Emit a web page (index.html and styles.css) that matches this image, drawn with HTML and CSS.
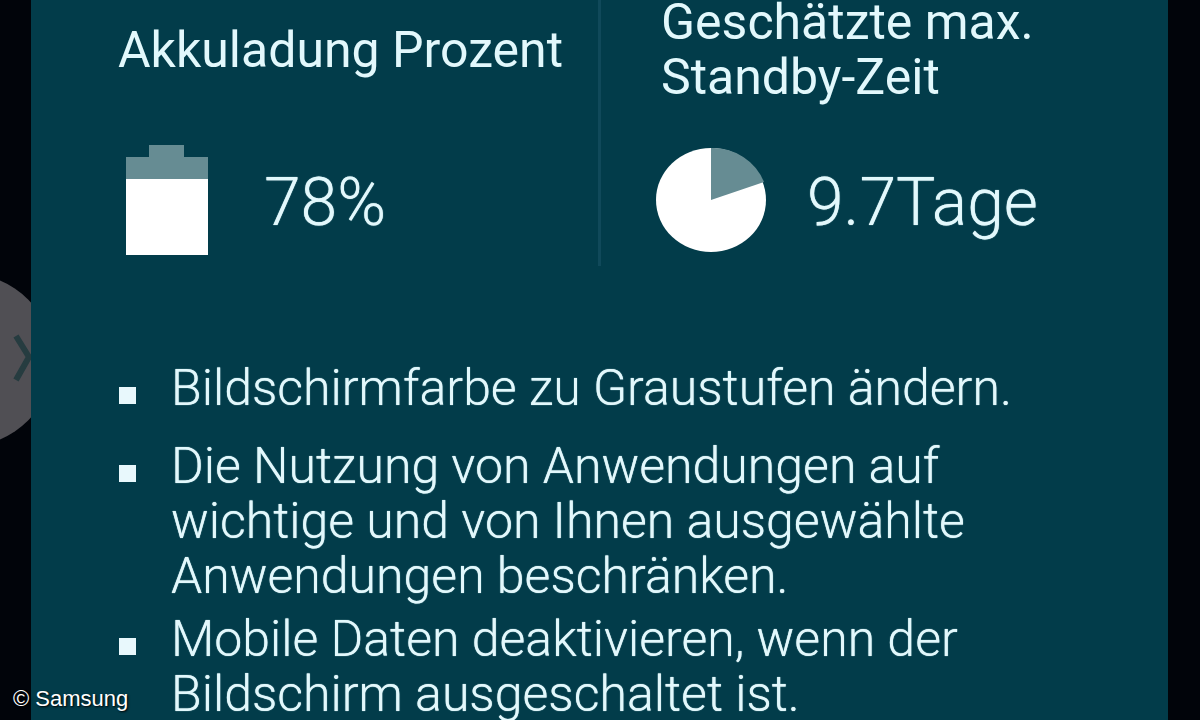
FILE: index.html
```html
<!DOCTYPE html>
<html lang="de">
<head>
<meta charset="utf-8">
<meta name="viewport" content="width=device-width, initial-scale=1">
<title>Ultra-Energiesparmodus</title>
<link rel="stylesheet" href="styles.css">
</head>
<body>
<div class="screen">
  <svg class="pager" viewBox="0 0 32 172" aria-hidden="true">
    <circle cx="-33" cy="86" r="86" fill="#504f54"/>
    <path d="M16 62 L29 83 L16 106" fill="none" stroke="#263c40" stroke-width="6"/>
  </svg>
  <main class="panel">
    <div class="stats">
      <section class="stat">
        <h2 class="title">Akkuladung Prozent</h2>
        <div class="reading">
          <svg class="battery" viewBox="0 0 82 110" aria-hidden="true">
            <path d="M0 12H23V0H58V12H82V34H0Z" fill="#668c93"/>
            <path d="M0 34H82V110H0Z" fill="#fff"/>
          </svg>
          <span class="value">78%</span>
        </div>
      </section>
      <section class="stat stat-standby">
        <h2 class="title">Geschätzte max. Standby-Zeit</h2>
        <div class="reading">
          <svg class="pie" viewBox="0 0 112 104" aria-hidden="true">
            <ellipse cx="56" cy="52" rx="55" ry="52" fill="#fff"/>
            <path d="M56 52V0A55 52 0 0 1 109 34Z" fill="#668c93"/>
          </svg>
          <span class="value">9.7Tage</span>
        </div>
      </section>
    </div>
    <ul class="notes">
      <li class="note note-first">Bildschirmfarbe zu Graustufen ändern.</li>
      <li class="note">Die Nutzung von Anwendungen auf wichtige und von Ihnen ausgewählte Anwendungen beschränken.</li>
      <li class="note">Mobile Daten deaktivieren, wenn der Bildschirm ausgeschaltet ist.</li>
    </ul>
  </main>
  <small class="credit">© Samsung</small>
</div>
</body>
</html>
```
FILE: styles.css
```css
* {
  box-sizing: border-box;
}

body {
  margin: 0;
  background: #01040a;
  font-family: Roboto, "Liberation Sans", sans-serif;
}

.screen {
  position: relative;
  height: 100vh;
  padding: 0 32px 0 31px;
  overflow: hidden;
}

.pager {
  position: absolute;
  left: 0;
  top: 274px;
  width: 32px;
  height: 172px;
}

.panel {
  position: relative;
  min-height: 100%;
  background: #023c4a;
  color: #e2f8fc;
}

.stats {
  display: grid;
  grid-template-columns: 567fr 570fr;
}

.stat {
  padding: 0 0 10px 87px;
}

.stat-standby {
  padding-left: 60px;
  border-left: 3px solid #10495a;
}

.title {
  display: flex;
  align-items: center;
  height: 100px;
  max-width: 460px;
  margin: 0;
  font-size: 50px;
  font-weight: 400;
  line-height: 55px;
}

.stat-standby .title {
  max-width: 420px;
}

.reading {
  display: flex;
  align-items: center;
  height: 112px;
  margin-top: 44px;
}

.battery {
  width: 82px;
  height: 110px;
  margin-left: 8px;
}

.pie {
  width: 112px;
  height: 104px;
  margin-left: -6px;
}

.value {
  margin-left: 56px;
  padding-top: 6px;
  font-size: 66px;
  font-weight: 300;
  line-height: 72px;
  text-shadow: 0 0 1px currentColor;
}

.stat-standby .value {
  margin-left: 40px;
}

.notes {
  display: flex;
  flex-direction: column;
  gap: 8px;
  margin: 0;
  padding: 95px 0 0 88px;
  list-style: none;
}

.note {
  display: flex;
  gap: 35px;
  max-width: 920px;
  font-size: 50px;
  font-weight: 300;
  line-height: 55px;
  text-shadow: 0 0 1px currentColor;
}

.note::before {
  content: "";
  flex: none;
  width: 17px;
  height: 17px;
  margin-top: 26px;
  background: #e8f8fc;
}

.note-first {
  margin-bottom: 15px;
}

.credit {
  position: absolute;
  left: 13px;
  bottom: 8px;
  color: #fff;
  font-family: "Liberation Sans", Arial, sans-serif;
  font-size: 22px;
  line-height: 26px;
  text-shadow: 1px 1px 2px #000;
}
```
